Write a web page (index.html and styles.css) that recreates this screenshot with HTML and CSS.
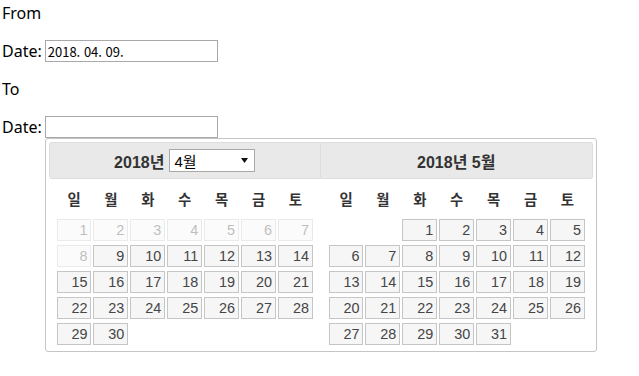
FILE: index.html
```html
<!DOCTYPE html>
<html lang="ko">
<head>
    <meta charset="UTF-8">
    <meta name="viewport" content="width=device-width, initial-scale=1.0">
    <title>Datepicker</title>
    <link rel="stylesheet" href="styles.css">
</head>
<body>
    <div class="form">
        <div class="row">From</div>
        <div class="row">
            <span class="label">Date:</span>
            <input type="text" class="date-input" value="2018. 04. 09.">
        </div>
        <div class="row">To</div>
        <div class="row">
            <span class="label">Date:</span>
            <div class="picker-anchor">
                <input type="text" class="date-input">

                <div class="datepicker">
                    <div class="dp-group">
                        <div class="dp-header dp-header-first">
                            <span class="dp-year">2018년</span>
                            <span class="dp-select">
                                <span>4월</span>
                                <svg class="dp-arrow" width="7" height="5" viewBox="0 0 7 5"><path d="M0 0h7L3.5 5z" fill="#111"/></svg>
                            </span>
                        </div>
                        <table class="dp-calendar">
                            <thead>
                                <tr><th>일</th><th>월</th><th>화</th><th>수</th><th>목</th><th>금</th><th>토</th></tr>
                            </thead>
                            <tbody>
                                <tr>
                                    <td class="disabled"><a>1</a></td><td class="disabled"><a>2</a></td><td class="disabled"><a>3</a></td><td class="disabled"><a>4</a></td><td class="disabled"><a>5</a></td><td class="disabled"><a>6</a></td><td class="disabled"><a>7</a></td>
                                </tr>
                                <tr>
                                    <td class="disabled"><a>8</a></td><td><a>9</a></td><td><a>10</a></td><td><a>11</a></td><td><a>12</a></td><td><a>13</a></td><td><a>14</a></td>
                                </tr>
                                <tr>
                                    <td><a>15</a></td><td><a>16</a></td><td><a>17</a></td><td><a>18</a></td><td><a>19</a></td><td><a>20</a></td><td><a>21</a></td>
                                </tr>
                                <tr>
                                    <td><a>22</a></td><td><a>23</a></td><td><a>24</a></td><td><a>25</a></td><td><a>26</a></td><td><a>27</a></td><td><a>28</a></td>
                                </tr>
                                <tr>
                                    <td><a>29</a></td><td><a>30</a></td><td></td><td></td><td></td><td></td><td></td>
                                </tr>
                            </tbody>
                        </table>
                    </div>

                    <div class="dp-group">
                        <div class="dp-header dp-header-last">
                            <span class="dp-year">2018년 5월</span>
                        </div>
                        <table class="dp-calendar">
                            <thead>
                                <tr><th>일</th><th>월</th><th>화</th><th>수</th><th>목</th><th>금</th><th>토</th></tr>
                            </thead>
                            <tbody>
                                <tr>
                                    <td></td><td></td><td><a>1</a></td><td><a>2</a></td><td><a>3</a></td><td><a>4</a></td><td><a>5</a></td>
                                </tr>
                                <tr>
                                    <td><a>6</a></td><td><a>7</a></td><td><a>8</a></td><td><a>9</a></td><td><a>10</a></td><td><a>11</a></td><td><a>12</a></td>
                                </tr>
                                <tr>
                                    <td><a>13</a></td><td><a>14</a></td><td><a>15</a></td><td><a>16</a></td><td><a>17</a></td><td><a>18</a></td><td><a>19</a></td>
                                </tr>
                                <tr>
                                    <td><a>20</a></td><td><a>21</a></td><td><a>22</a></td><td><a>23</a></td><td><a>24</a></td><td><a>25</a></td><td><a>26</a></td>
                                </tr>
                                <tr>
                                    <td><a>27</a></td><td><a>28</a></td><td><a>29</a></td><td><a>30</a></td><td><a>31</a></td><td></td><td></td>
                                </tr>
                            </tbody>
                        </table>
                    </div>
                </div>
            </div>
        </div>
    </div>
</body>
</html>
```

FILE: styles.css
```css
html,
body {
    min-height: 100%;
}

body {
    margin: 0;
    padding: 2px 0 0 2px;
    min-height: 376px;
    box-sizing: border-box;
    background: #ffffff;
    color: #000000;
    font-family: "Noto Sans", "Noto Sans CJK KR", sans-serif;
    font-size: 16px;
}

.row {
    display: flex;
    align-items: center;
    height: 22px;
    margin-bottom: 16px;
}

.label {
    margin-right: 3px;
}

.picker-anchor {
    position: relative;
}

.date-input {
    display: block;
    box-sizing: border-box;
    width: 173px;
    height: 22px;
    margin: 0;
    padding: 1px 2px;
    border: 1px solid #a9a9a9;
    font-family: "Noto Sans CJK KR", sans-serif;
    font-size: 13px;
    color: #000;
    outline: none;
}

/* datepicker popup, two months side by side */
.datepicker {
    position: absolute;
    top: 100%;
    left: 0;
    display: flex;
    width: 544px;
    padding: 3px 3px 0;
    border: 1px solid #c5c5c5;
    border-radius: 3px;
    background: #ffffff;
    color: #333333;
    font-family: "Liberation Sans", "Noto Sans CJK KR", sans-serif;
    font-size: 16px;
    z-index: 2;
}

.dp-group {
    width: 50%;
}

.dp-header {
    display: flex;
    align-items: center;
    justify-content: center;
    box-sizing: border-box;
    height: 37px;
    border: 1px solid #dddddd;
    background: #e9e9e9;
    color: #333333;
    font-weight: bold;
}

.dp-header-first {
    border-radius: 3px 0 0 3px;
}

.dp-header-last {
    border-left-width: 0;
    border-radius: 0 3px 3px 0;
}

.dp-select {
    display: flex;
    align-items: center;
    justify-content: space-between;
    box-sizing: border-box;
    width: 86px;
    height: 23px;
    margin-left: 5px;
    padding: 0 6px 0 4px;
    border: 1px solid #a9a9a9;
    background: #ffffff;
    color: #000000;
    font-weight: normal;
    font-size: 15px;
}

.dp-arrow {
    display: block;
}

.dp-calendar {
    width: 95%;
    margin: 0 auto 4px;
    border-collapse: collapse;
    table-layout: fixed;
    font-size: 14.4px;
}

.dp-calendar th {
    height: 38px;
    padding: 0;
    text-align: center;
    font-weight: bold;
    color: #333333;
}

.dp-calendar td {
    padding: 2px 1px;
    height: 22px;
}

.dp-calendar td a {
    display: block;
    box-sizing: border-box;
    height: 22px;
    padding: 0 3px;
    border: 1px solid #c5c5c5;
    background: #f6f6f6;
    color: #454545;
    line-height: 20px;
    text-align: right;
}

.dp-calendar td.disabled a {
    opacity: 0.35;
}
```
